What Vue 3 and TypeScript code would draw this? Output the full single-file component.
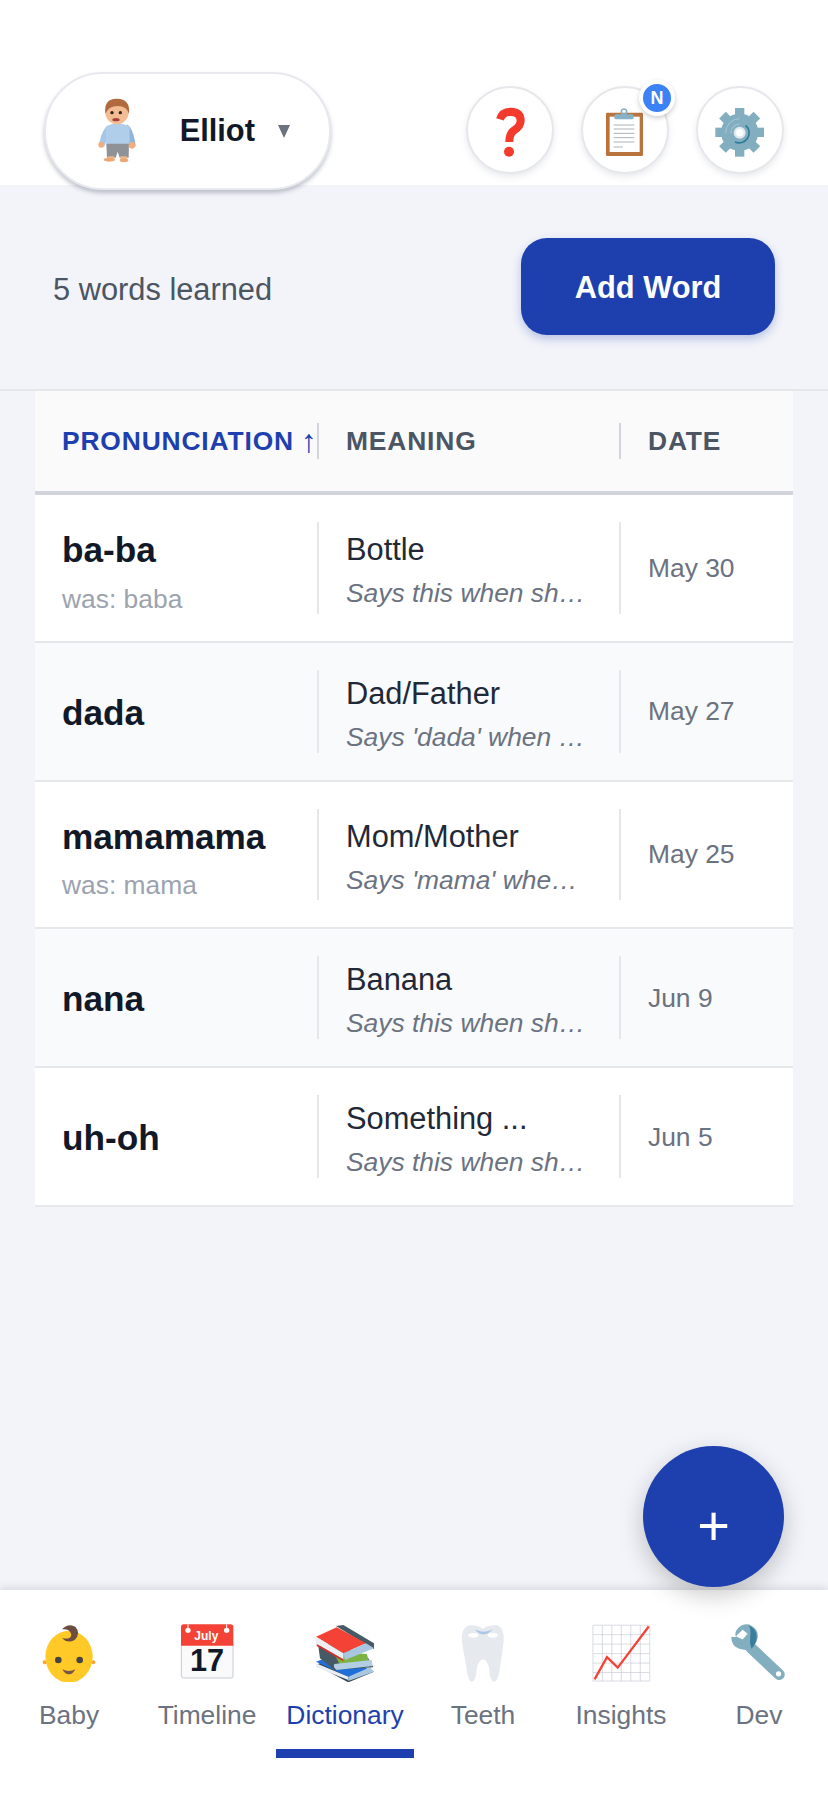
<script setup lang="ts">
interface Word {
  word: string
  was?: string
  meaning: string
  note: string
  date: string
}

const words: Word[] = [
  { word: 'ba-ba', was: 'was: baba', meaning: 'Bottle', note: 'Says this when she wants her bottle', date: 'May 30' },
  { word: 'dada', meaning: 'Dad/Father', note: "Says 'dada' when he sees his dad", date: 'May 27' },
  { word: 'mamamama', was: 'was: mama', meaning: 'Mom/Mother', note: "Says 'mama' when she wants mom", date: 'May 25' },
  { word: 'nana', meaning: 'Banana', note: 'Says this when she sees a banana', date: 'Jun 9' },
  { word: 'uh-oh', meaning: 'Something ...', note: 'Says this when she drops something', date: 'Jun 5' }
]

const gearAngles = [0, 45, 90, 135, 180, 225, 270, 315]
const gridX = [535, 564, 593, 622, 651, 680, 709]
const gridY = [586, 615, 644, 673, 702, 731, 757]
</script>

<template>
  <div class="app">
    <header class="top">
      <button class="pill">
        <svg class="doll" viewBox="290 140 125 200">
          <path d="M322 226 Q306 236 298 274 L296 286 L312 288 L326 252Z" fill="#a5c6e6" />
          <path d="M380 222 Q396 232 404 272 L406 288 L388 288 L376 252Z" fill="#8fb5da" />
          <path d="M316 230 Q350 208 388 230 L388 284 L318 284Z" fill="#b0cdea" />
          <path d="M318 280 H386 L385 322 H358 L352 304 L346 322 H320Z" fill="#8f9398" />
          <circle cx="303" cy="283" r="9" fill="#efae7c" />
          <circle cx="395" cy="285" r="10" fill="#efae7c" />
          <rect x="322" y="318" width="20" height="12" fill="#efb98c" />
          <rect x="360" y="318" width="20" height="12" fill="#efb98c" />
          <ellipse cx="327" cy="328" rx="17" ry="6" fill="#eba874" />
          <ellipse cx="371" cy="330" rx="13" ry="6" fill="#eba874" />
          <ellipse cx="350" cy="186" rx="35" ry="36" fill="#f2bd92" />
          <path d="M315 190 Q310 144 350 145 Q391 146 386 190 Q380 168 352 167 Q324 168 315 190Z" fill="#b06a3e" />
          <circle cx="335" cy="187" r="5" fill="#2b2320" />
          <circle cx="360" cy="187" r="5" fill="#2b2320" />
          <ellipse cx="347" cy="208" rx="11" ry="5" fill="#a8413a" />
        </svg>
        <span class="name">Elliot</span>
        <span class="caret"></span>
      </button>
      <div class="actions">
        <button class="round">
          <svg class="ico" viewBox="160 140 100 160">
            <path d="M181 180 Q188 157 213 157 Q243 158 243 184 Q243 200 223 213 Q209 222 209 248" fill="none" stroke="#f4392d" stroke-width="24" />
            <circle cx="208" cy="277" r="15" fill="#f4392d" />
          </svg>
        </button>
        <button class="round">
          <svg class="ico" viewBox="495 140 125 160">
            <rect x="501" y="160" width="111" height="130" rx="4" fill="#b9733d" />
            <rect x="512" y="172" width="90" height="106" fill="#fff" />
            <path d="M524 197 H586 M524 209 H586 M524 222 H586 M524 235 H586 M524 248 H586" stroke="#a9b2bd" stroke-width="3" />
            <path d="M524 263 H552" stroke="#a9b2bd" stroke-width="3" />
            <circle cx="555" cy="157" r="8" fill="none" stroke="#86b1c7" stroke-width="5" />
            <rect x="526" y="165" width="58" height="15" rx="5" fill="#86b1c7" />
          </svg>
          <span class="badge">N</span>
        </button>
        <button class="round">
          <svg class="ico" viewBox="820 140 160 160">
            <circle cx="900" cy="219" r="56" fill="#82aec0" />
            <rect v-for="a in gearAngles" :key="a" x="886" y="146" width="28" height="32" fill="#82aec0" :transform="`rotate(${a} 900 219)`" />
            <path d="M858 222 A42 42 0 0 1 900 178" fill="none" stroke="#a9c6d8" stroke-width="3" />
            <path d="M874 222 A26 26 0 0 1 900 194" fill="none" stroke="#a9c6d8" stroke-width="3" />
            <path d="M918 198 A30 30 0 0 1 886 248" fill="none" stroke="#2f7a9a" stroke-width="5" />
            <circle cx="900" cy="220" r="18" fill="#dfe9ef" />
            <circle cx="900" cy="220" r="11" fill="#fff" />
          </svg>
        </button>
      </div>
    </header>

    <section class="summary">
      <span class="count">5 words learned</span>
      <button class="add">Add Word</button>
    </section>

    <section class="table">
      <div class="row head">
        <div class="cell active">PRONUNCIATION<span class="arrow">↑</span></div>
        <div class="cell">MEANING</div>
        <div class="cell last">DATE</div>
      </div>
      <div v-for="(w, i) in words" :key="w.word" class="row body" :class="{ alt: i % 2 === 1 }">
        <div class="cell">
          <div class="word">{{ w.word }}</div>
          <div v-if="w.was" class="was">{{ w.was }}</div>
        </div>
        <div class="cell">
          <div class="meaning">{{ w.meaning }}</div>
          <div class="note">{{ w.note }}</div>
        </div>
        <div class="cell last date">{{ w.date }}</div>
      </div>
    </section>

    <div class="spacer"></div>

    <button class="fab">+</button>

    <nav class="nav">
      <div class="tab">
        <svg class="tab-ico" viewBox="117 120 180 186">
          <circle cx="134" cy="247" r="6" fill="#f2a63a" />
          <circle cx="280" cy="247" r="6" fill="#f2a63a" />
          <ellipse cx="207" cy="230" rx="71" ry="78" fill="#ffca28" />
          <path d="M186 148 Q205 128 226 140 Q244 160 224 180 Q202 192 186 174 Q212 180 214 164 Q210 146 186 148Z" fill="#6d4c41" />
          <circle cx="175" cy="240" r="10" fill="#444" />
          <circle cx="239" cy="240" r="10" fill="#444" />
          <path d="M187 268 Q207 278 226 268 Q218 284 207 283 Q195 284 187 268Z" fill="#795548" />
        </svg>
        <span>Baby</span>
      </div>
      <div class="tab">
        <svg class="tab-ico" viewBox="531 120 180 186">
          <path d="M544 190 H699 V287 Q699 294 692 294 H551 Q544 294 544 287Z" fill="#fafafa" stroke="#c5cad3" stroke-width="3" />
          <path d="M543 197 V141 Q543 133 551 133 H692 Q700 133 700 141 V197Z" fill="#f44336" />
          <path d="M564 133 V150 M680 133 V150" stroke="#fff" stroke-width="3" />
          <circle cx="564" cy="151" r="8" fill="#fff" />
          <circle cx="680" cy="151" r="8" fill="#fff" />
          <text x="619" y="179" class="cal-m" text-anchor="middle">July</text>
          <text x="621" y="274" class="cal-d" text-anchor="middle">17</text>
        </svg>
        <span>Timeline</span>
      </div>
      <div class="tab on">
        <svg class="tab-ico" viewBox="945 120 180 186">
          <path d="M948 255 L1010 225 L1122 275 L1045 307 Z" fill="#37474f" />
          <path d="M948 245 L1000 225 L1105 268 L1045 290 Z" fill="#1e6fd9" />
          <path d="M948 250 L1045 290 L1045 300 L948 262Z" fill="#e8eef3" />
          <path d="M1045 290 L1110 262 L1122 275 L1045 303Z" fill="#a9c6e0" />
          <path d="M955 198 L1005 190 L1105 235 L1120 262 L1003 270 L960 235Z" fill="#455a64" />
          <path d="M1000 215 L1100 222 L1108 245 L1020 255Z" fill="#7cb342" />
          <path d="M1003 252 L1115 240 L1118 258 L1010 270 Q998 262 1003 252Z" fill="#b3cde3" />
          <path d="M1008 138 L1030 135 L1122 190 L1122 208 L1100 195Z" fill="#455a64" />
          <path d="M948 170 L1010 142 L1098 190 L1030 220Z" fill="#f44336" />
          <path d="M948 170 L1030 220 L1030 238 L950 192Q944 180 948 170Z" fill="#eceff1" />
          <path d="M950 192 L1030 238 L1030 244 L950 198Z" fill="#d32f2f" />
          <path d="M1030 220 L1098 190 L1122 205 L1035 240Z" fill="#a9c6e0" />
        </svg>
        <span>Dictionary</span>
      </div>
      <div class="tab">
        <svg class="tab-ico" viewBox="117 570 180 186">
          <path d="M165 586 Q190 584 207 596 Q224 584 250 586 Q272 596 269 635 Q264 675 258 710 Q253 755 240 755 Q228 755 226 720 Q222 690 207 688 Q192 690 188 720 Q186 755 173 755 Q162 755 157 710 Q150 675 144 635 Q140 596 165 586Z" fill="#e6e9ee" />
          <path d="M183 598 Q208 612 237 598 Q222 614 208 613 Q194 614 183 598Z" fill="#a9c8e8" />
          <ellipse cx="178" cy="616" rx="15" ry="7" fill="#fff" />
          <ellipse cx="236" cy="616" rx="15" ry="7" fill="#fff" />
        </svg>
        <span>Teeth</span>
      </div>
      <div class="tab">
        <svg class="tab-ico" viewBox="531 570 180 190">
          <rect x="535" y="586" width="174" height="171" fill="#fff" />
          <path v-for="x in gridX" :key="x" :d="`M${x} 586 V757`" stroke="#c5cad3" stroke-width="2" />
          <path v-for="y in gridY" :key="y" :d="`M535 ${y} H709`" stroke="#c5cad3" stroke-width="2" />
          <polyline points="540,752 578,684 611,716 706,590" fill="none" stroke="#f44336" stroke-width="7" />
        </svg>
        <span>Insights</span>
      </div>
      <div class="tab">
        <svg class="tab-ico" viewBox="945 570 180 190">
          <path d="M1010 655 L1097 737" stroke="#82aec0" stroke-width="34" stroke-linecap="round" />
          <path d="M1005 584 Q985 580 970 596 Q958 610 965 622 L950 622 Q950 650 975 658 Q1005 668 1020 650 Q1040 620 1026 600 Q1018 590 1005 584Z" fill="#82aec0" />
          <path d="M1003 586 Q1028 596 1028 622 Q1026 645 1012 658 Q1005 640 1008 620 Q1012 600 1003 586Z" fill="#3a7e9c" />
          <path d="M985 600 L1000 612 L985 630 L964 620 Z" fill="#fff" />
          <circle cx="1095" cy="735" r="8" fill="#fff" />
        </svg>
        <span>Dev</span>
      </div>
    </nav>
  </div>
</template>

<style>
html,
body {
  margin: 0;
  background: #f3f4f9;
}
</style>

<style scoped>
.app {
  position: relative;
  width: 828px;
  height: 1793px;
  display: flex;
  flex-direction: column;
  background: #f3f4f9;
  font-family: "Liberation Sans", Arial, sans-serif;
  overflow: hidden;
}
button {
  font-family: inherit;
  padding: 0;
  cursor: pointer;
}
.top {
  height: 185px;
  flex: none;
  box-sizing: border-box;
  padding: 72px 44px 0 44px;
  background: #fff;
  display: flex;
  justify-content: space-between;
  align-items: flex-start;
}
.pill {
  position: relative;
  z-index: 2;
  width: 287px;
  height: 118px;
  flex: none;
  box-sizing: border-box;
  border: 2px solid #e8e9ef;
  border-radius: 59px;
  background: #fff;
  box-shadow: 0 3px 4px rgba(75, 85, 110, 0.35);
  display: flex;
  align-items: center;
  padding-left: 51px;
}
.doll {
  width: 41.67px;
  height: 66.67px;
  flex: none;
  margin-top: -1px;
}
.name {
  margin-left: 41px;
  font-size: 30.8px;
  font-weight: 700;
  color: #111827;
}
.caret {
  margin-left: 23px;
  width: 0;
  height: 0;
  border-left: 6.5px solid transparent;
  border-right: 6.5px solid transparent;
  border-top: 13px solid #6b7280;
}
.actions {
  display: flex;
  gap: 27px;
  padding-top: 14px;
}
.round {
  position: relative;
  width: 88px;
  height: 88px;
  box-sizing: border-box;
  border: 2px solid #e5e7eb;
  border-radius: 50%;
  background: #fff;
  box-shadow: 0 3px 6px rgba(90, 100, 130, 0.14);
  display: flex;
  align-items: center;
  justify-content: center;
}
.ico {
  width: 53.33px;
  height: 53.33px;
  margin-top: 6px;
}
.round:nth-child(1) .ico {
  width: 33.33px;
}
.round:nth-child(2) .ico {
  width: 41.67px;
}
.badge {
  position: absolute;
  top: -8px;
  right: -8px;
  width: 28px;
  height: 28px;
  border: 4px solid #fff;
  border-radius: 50%;
  background: #3b82f6;
  color: #fff;
  font-size: 18px;
  font-weight: 700;
  line-height: 28px;
  text-align: center;
  box-shadow: 0 2px 5px rgba(0, 0, 0, 0.2);
}
.summary {
  height: 206px;
  flex: none;
  box-sizing: border-box;
  padding: 53px 53px 0 53px;
  border-bottom: 2px solid #e5e7eb;
  display: flex;
  justify-content: space-between;
  align-items: flex-start;
}
.count {
  margin-top: 33px;
  font-size: 30.8px;
  line-height: 37px;
  color: #4b5563;
  white-space: nowrap;
}
.add {
  width: 254px;
  height: 97px;
  border: none;
  border-radius: 26px;
  background: #1e40af;
  color: #fff;
  font-size: 30.8px;
  font-weight: 700;
  padding-top: 2px;
  box-shadow: 0 4px 10px rgba(30, 64, 175, 0.28);
}
.table {
  margin: 0 35px;
  flex: none;
}
.row {
  display: grid;
  grid-template-columns: 284px 302px 172px;
}
.head {
  height: 104px;
  box-sizing: border-box;
  background: #fafafa;
  border-bottom: 4px solid #d1d5db;
  align-items: center;
}
.head .cell {
  height: 36px;
  font-size: 26.4px;
  font-weight: 700;
  letter-spacing: 0.85px;
  color: #4b5563;
  white-space: nowrap;
  flex-direction: row;
  justify-content: flex-start;
  align-items: center;
  border-right-color: #d1d5db;
}
.head .active {
  color: #1e40af;
  padding-right: 0;
}
.arrow {
  margin-left: 7px;
  font-size: 32px;
  font-weight: 400;
  letter-spacing: 0;
}
.body {
  padding: 27px 0;
  background: #fff;
  border-bottom: 2px solid #e5e7eb;
}
.body.alt {
  background: #f9fafb;
}
.cell {
  box-sizing: border-box;
  min-width: 0;
  padding: 0 28px 0 27px;
  border-right: 2px solid #e5e7eb;
  display: flex;
  flex-direction: column;
  justify-content: center;
}
.cell.last {
  border-right: none;
}
.word {
  padding-top: 2px;
  font-size: 35.2px;
  line-height: 49px;
  font-weight: 700;
  color: #111827;
}
.word:not(:last-child) {
  padding-top: 3px;
}
.was {
  margin-top: 9.5px;
  font-size: 26.4px;
  line-height: 30px;
  color: #9ca3af;
}
.meaning {
  padding-top: 3px;
  font-size: 30.8px;
  line-height: 42px;
  color: #1f2937;
  white-space: nowrap;
  overflow: hidden;
}
.note {
  margin-top: 7px;
  font-size: 26.4px;
  line-height: 31px;
  font-style: italic;
  color: #6b7280;
  white-space: nowrap;
  overflow: hidden;
  text-overflow: ellipsis;
}
.date {
  padding-top: 1px;
  font-size: 26.4px;
  color: #6b7280;
}
.spacer {
  flex: 1;
}
.fab {
  position: absolute;
  z-index: 3;
  left: 643px;
  top: 1446px;
  width: 141px;
  height: 141px;
  border: none;
  border-radius: 50%;
  background: #1e40af;
  color: #fff;
  font-size: 56px;
  line-height: 141px;
  padding-top: 9px;
  box-shadow: 0 8px 24px rgba(0, 0, 0, 0.22);
}
.nav {
  height: 203px;
  flex: none;
  box-sizing: border-box;
  background: #fff;
  display: grid;
  grid-template-columns: repeat(6, 138px);
  padding-bottom: 35px;
  box-shadow: 0 -3px 8px rgba(0, 0, 0, 0.1);
  position: relative;
}
.tab {
  display: flex;
  flex-direction: column;
  align-items: center;
  padding-top: 30px;
  font-size: 26.4px;
  color: #6b7280;
  line-height: 30px;
}
.tab span {
  margin-top: 18px;
}
.tab.on {
  color: #1e40af;
  border-bottom: 9px solid #1e40af;
}
.tab-ico {
  width: 60px;
  height: 62px;
}
.cal-m {
  font: 700 36px "Liberation Sans", Arial, sans-serif;
  fill: #fff;
}
.cal-d {
  font: 700 92px "Liberation Sans", Arial, sans-serif;
  fill: #111827;
}
</style>
